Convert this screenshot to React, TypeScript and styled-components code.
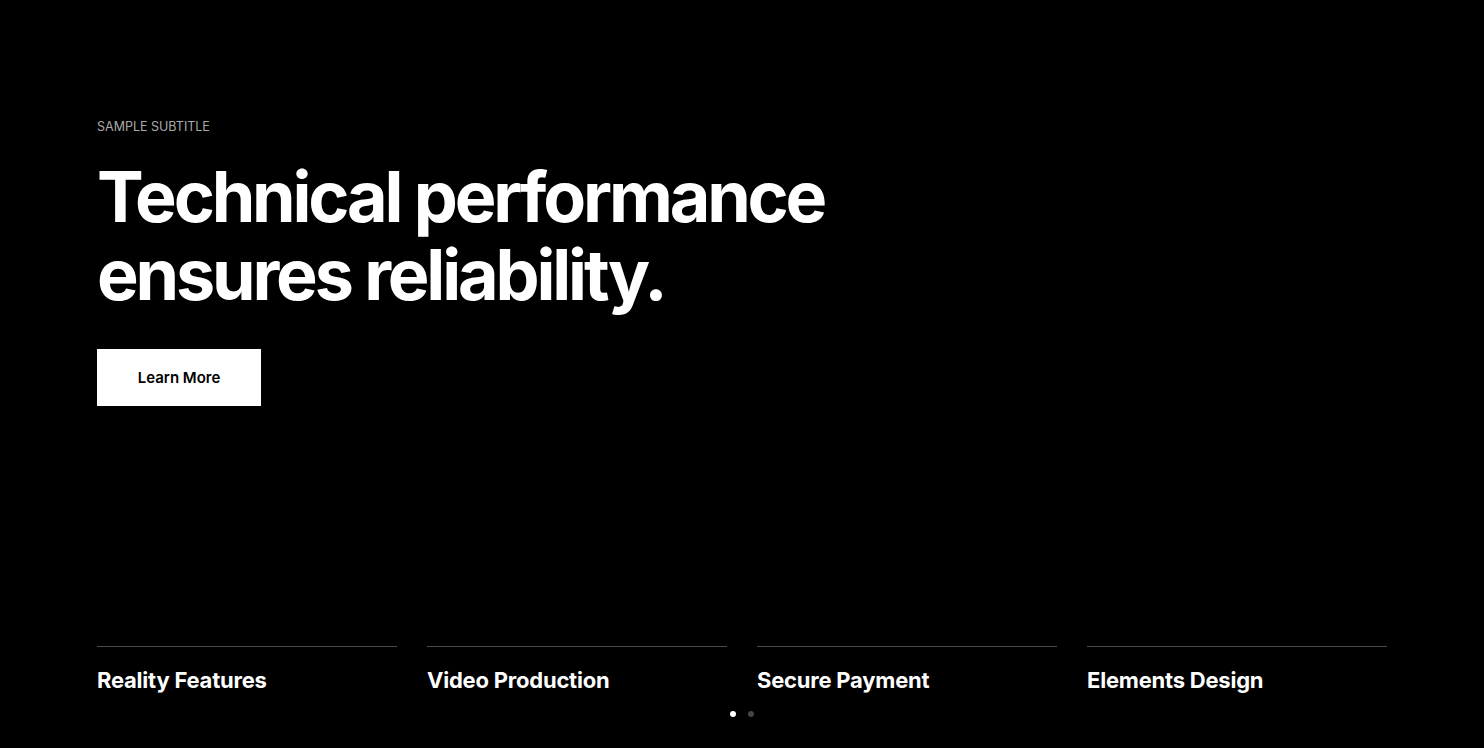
import React from "react";
import styled, { createGlobalStyle } from "styled-components";

const Global = createGlobalStyle`
  html, body { margin: 0; padding: 0; background: #000; }
  body { font-family: Inter, "Noto Sans", sans-serif; color: #fff; }
  * { box-sizing: border-box; }
`;

const Page = styled.main`
  width: 1484px;
  height: 748px;
  background: #000;
  padding: 0 97px;
  display: flex;
  flex-direction: column;
  overflow: hidden;
`;

const Hero = styled.section`
  padding-top: 120px;
  display: flex;
  flex-direction: column;
  align-items: flex-start;
`;

const Subtitle = styled.div`
  font-size: 12.5px;
  line-height: 14px;
  color: #a9a9a9;
  text-transform: uppercase;
`;

const Heading = styled.h1`
  margin: 24px 0 0;
  font-size: 70px;
  line-height: 78px;
  font-weight: 700;
  letter-spacing: -0.045em;
  color: #fff;
`;

const Button = styled.a`
  margin-top: 35px;
  width: 164px;
  height: 57px;
  background: #fff;
  color: #000;
  display: flex;
  align-items: center;
  justify-content: center;
  font-size: 15px;
  font-weight: 600;
  text-decoration: none;
`;

const Features = styled.div`
  margin-top: auto;
  display: grid;
  grid-template-columns: repeat(4, 1fr);
  column-gap: 30px;
`;

const Feature = styled.div`
  border-top: 1px solid #4a4a4a;
  padding-top: 19px;
  font-size: 22px;
  line-height: 28px;
  font-weight: 700;
  letter-spacing: -0.01em;
`;

const Dots = styled.div`
  display: flex;
  justify-content: center;
  gap: 12px;
  padding: 17px 0 31px;
`;

const Dot = styled.span<{ $active?: boolean }>`
  width: 6px;
  height: 6px;
  border-radius: 50%;
  background: ${(p) => (p.$active ? "#fff" : "#444")};
`;

export default function App() {
  return (
    <Page>
      <Global />
      <Hero>
        <Subtitle>Sample Subtitle</Subtitle>
        <Heading>
          Technical performance
          <br />
          ensures reliability.
        </Heading>
        <Button href="#">Learn More</Button>
      </Hero>
      <Features>
        <Feature>Reality Features</Feature>
        <Feature>Video Production</Feature>
        <Feature>Secure Payment</Feature>
        <Feature>Elements Design</Feature>
      </Features>
      <Dots>
        <Dot $active />
        <Dot />
      </Dots>
    </Page>
  );
}
